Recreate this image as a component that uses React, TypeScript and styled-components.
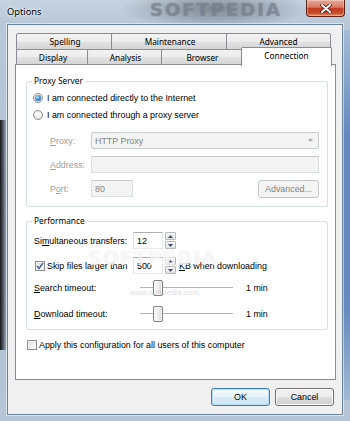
import React from "react";
import styled, { createGlobalStyle } from "styled-components";

const UI = `"Liberation Sans", Arial, sans-serif`;
const SEGOE = `"Noto Sans", "Open Sans", sans-serif`;

const GlobalStyle = createGlobalStyle`
  html, body { margin: 0; padding: 0; }
  body { width: 350px; height: 421px; overflow: hidden; background: #aebfd2; }
  * { box-sizing: border-box; }
`;

const Window = styled.div`
  position: relative;
  width: 350px;
  height: 421px;
  display: flex;
  flex-direction: column;
  overflow: hidden;
  background:
    linear-gradient(to right, rgba(8,8,10,.92) 0, rgba(25,28,34,.65) 3px, rgba(60,80,100,0) 7px) 0 120px / 8px 230px no-repeat,
    linear-gradient(to bottom, rgba(120,160,210,.3) 0, rgba(70,115,180,.75) 30%, rgba(70,115,180,.7) 75%, rgba(120,160,210,.3) 100%) right 0 top 30px / 8px 370px no-repeat,
    radial-gradient(ellipse 95px 20px at 215px 9px, rgba(70,76,86,.55), rgba(70,76,86,0)),
    linear-gradient(to bottom, #c6d3e0 0, #b9c8d8 24px, #aebfd2 60%, #b5c5d6 100%);
`;

const TitleBar = styled.div`
  position: relative;
  height: 24px;
  flex: none;
  display: flex;
  align-items: flex-start;
  justify-content: space-between;
  padding-left: 7px;
`;

const Title = styled.span`
  position: relative;
  z-index: 1;
  font-family: ${SEGOE};
  font-size: 9.3px;
  line-height: 24px;
  color: #000;
  text-shadow: 0 0 5px rgba(255,255,255,.95), 0 0 2px rgba(255,255,255,.9);
`;

const TitleMark = styled.span`
  position: absolute;
  left: 150px;
  top: 0;
  font-family: "DejaVu Sans", sans-serif;
  font-weight: bold;
  font-size: 18px;
  line-height: 20px;
  letter-spacing: 2px;
  color: rgba(150,160,172,.55);
  text-shadow: 0 0 1px rgba(40,45,55,.5);
  pointer-events: none;
`;

const CloseButton = styled.div`
  position: relative;
  width: 39px;
  height: 17px;
  margin-right: 5px;
  border: 1px solid #5b2419;
  border-top: none;
  border-radius: 0 0 4px 4px;
  background: linear-gradient(to bottom, #e9a896 0%, #d97a63 45%, #c23d22 52%, #c5492a 80%, #e0905f 100%);
  box-shadow: inset 0 0 0 1px rgba(255,255,255,.3);
  display: flex;
  align-items: center;
  justify-content: center;
`;

const Client = styled.div`
  flex: 1;
  margin: 0 7px 6px;
  border: 1px solid #6f8499;
  box-shadow: 0 0 0 1px rgba(255,255,255,.5);
  background: #f0f0f0;
  padding: 8px 6px 0 7px;
  display: flex;
  flex-direction: column;
`;

const TabRow = styled.div<{ $front?: boolean }>`
  display: flex;
  align-items: flex-start;
  margin-left: 1px;
  margin-top: ${(p) => (p.$front ? "-1px" : "0")};
`;

const Tab = styled.div<{ $w: number; $h: number; $selected?: boolean }>`
  position: relative;
  flex: none;
  width: ${(p) => (p.$selected ? p.$w + 4 : p.$w)}px;
  height: ${(p) => (p.$selected ? p.$h + 3 : p.$h)}px;
  margin: ${(p) => (p.$selected ? "-2px -2px -1px -3px" : "0")};
  border: 1px solid #898c95;
  border-bottom: ${(p) => (p.$selected ? "none" : "1px solid #898c95")};
  border-radius: 2px 2px 0 0;
  background: ${(p) =>
    p.$selected
      ? "#fff"
      : "linear-gradient(to bottom, #f3f3f3 0%, #ececec 50%, #e1e1e1 52%, #d6d6d6 100%)"};
  z-index: ${(p) => (p.$selected ? 2 : 0)};
  display: flex;
  align-items: ${(p) => (p.$selected ? "flex-start" : "center")};
  padding-top: ${(p) => (p.$selected ? "2px" : "0")};
  justify-content: center;
  font-family: ${SEGOE};
  font-size: 8.3px;
  color: #000;
  & + & { margin-left: ${(p) => (p.$selected ? "-3px" : "-1px")}; }
`;

const Panel = styled.div`
  margin-top: -1px;
  height: 316px;
  flex: none;
  background: #fff;
  border: 1px solid #898c95;
  padding: 0 7px 0 10px;
  display: flex;
  flex-direction: column;
`;

const Group = styled.section<{ $top: number }>`
  margin-top: ${(p) => p.$top}px;
  display: flex;
  flex-direction: column;
`;

const GroupHead = styled.div`
  display: flex;
  height: 12px;
  align-items: stretch;
`;

const HeadLeft = styled.span`
  width: 6px;
  height: 6px;
  align-self: flex-end;
  border-top: 1px solid #d5dfe5;
  border-left: 1px solid #d5dfe5;
  border-top-left-radius: 3px;
`;

const HeadRight = styled.span`
  flex: 1;
  height: 6px;
  align-self: flex-end;
  border-top: 1px solid #d5dfe5;
  border-right: 1px solid #d5dfe5;
  border-top-right-radius: 3px;
`;

const Caption = styled.span`
  padding: 0 2px;
  font-family: ${SEGOE};
  font-size: 8.3px;
  line-height: 12px;
  color: #000;
`;

const GroupBody = styled.div<{ $pt: number; $pb: number; $pl: number }>`
  border: 1px solid #d5dfe5;
  border-top: none;
  border-radius: 0 0 3px 3px;
  padding: ${(p) => `${p.$pt}px 8px ${p.$pb}px ${p.$pl}px`};
  display: flex;
  flex-direction: column;
`;

const Row = styled.div<{ $mt?: number; $h?: number; $pl?: number }>`
  display: flex;
  align-items: center;
  height: ${(p) => p.$h ?? 17}px;
  margin-top: ${(p) => p.$mt ?? 0}px;
  padding-left: ${(p) => p.$pl ?? 0}px;
  font-family: ${UI};
  font-size: 8.9px;
  color: #000;
  white-space: nowrap;
`;

const Radio = styled.span<{ $checked?: boolean }>`
  flex: none;
  width: 10px;
  height: 10px;
  border-radius: 50%;
  border: 1px solid #8e8f8f;
  background: radial-gradient(circle at 50% 40%, #ffffff 0, #ececec 55%, #d2d2d2 100%);
  display: flex;
  align-items: center;
  justify-content: center;
  margin-right: 4px;
  &::after {
    content: "";
    display: ${(p) => (p.$checked ? "block" : "none")};
    width: 6px;
    height: 6px;
    border-radius: 50%;
    background: radial-gradient(circle at 40% 35%, #bfe6fc 0, #3f93d6 45%, #184a83 100%);
  }
`;

const Check = styled.span<{ $ml?: number }>`
  flex: none;
  width: 10px;
  height: 10px;
  margin-left: ${(p) => p.$ml ?? 0}px;
  margin-right: 2px;
  border: 1px solid #8f8f8f;
  background: linear-gradient(135deg, #dcdcdc 0, #f4f4f4 60%, #ffffff 100%);
  box-shadow: inset 0 0 0 1px #f4f4f4;
  display: flex;
  align-items: center;
  justify-content: center;
`;

const Label = styled.span<{ $w?: number; $disabled?: boolean }>`
  flex: none;
  width: ${(p) => (p.$w ? `${p.$w}px` : "auto")};
  color: ${(p) => (p.$disabled ? "#a0a0a0" : "#000")};
`;

const Combo = styled.div`
  flex: 1;
  height: 17px;
  border: 1px solid #c9cbcf;
  border-radius: 2px;
  background: #f4f4f4;
  display: flex;
  align-items: center;
  justify-content: space-between;
  padding: 0 5px 0 3px;
  color: #838383;
`;

const Edit = styled.div<{ $w?: number; $disabled?: boolean }>`
  flex: ${(p) => (p.$w ? "none" : "1")};
  width: ${(p) => (p.$w ? `${p.$w}px` : "auto")};
  height: 17px;
  border: 1px solid ${(p) => (p.$disabled ? "#cfd1d4" : "#abadb3")};
  border-color: ${(p) => (p.$disabled ? "#c6c8cc #dadcdf #dadcdf #dadcdf" : "#abadb3 #e3e9ef #e3e9ef #e2e3ea")};
  background: ${(p) => (p.$disabled ? "#f4f4f4" : "#fff")};
  color: ${(p) => (p.$disabled ? "#838383" : "#000")};
  display: flex;
  align-items: center;
  padding-left: 3px;
`;

const Button = styled.div<{ $w: number; $default?: boolean; $disabled?: boolean }>`
  flex: none;
  width: ${(p) => p.$w}px;
  height: 18px;
  border-radius: 3px;
  border: 1px solid ${(p) => (p.$disabled ? "#c3c6ca" : p.$default ? "#3c7fb1" : "#707070")};
  background: ${(p) =>
    p.$disabled
      ? "#f4f4f4"
      : p.$default
      ? "linear-gradient(to bottom, #f3f9fd 0%, #e6f2fa 50%, #d7ebf8 52%, #cfe6f5 100%)"
      : "linear-gradient(to bottom, #f2f2f2 0%, #ebebeb 50%, #dddddd 52%, #cfcfcf 100%)"};
  box-shadow: inset 0 0 0 1px ${(p) => (p.$disabled ? "#f4f4f4" : p.$default ? "#b8dcf4" : "#fcfcfc")};
  display: flex;
  align-items: center;
  justify-content: center;
  font-family: ${UI};
  font-size: 8.9px;
  color: ${(p) => (p.$disabled ? "#838383" : "#000")};
  margin-left: ${(p) => (p.$disabled ? "auto" : "0")};
`;

const Spin = styled.div`
  flex: none;
  width: 11px;
  height: 17px;
  margin-left: 2px;
  display: flex;
  flex-direction: column;
  gap: 1px;
`;

const SpinHalf = styled.div`
  flex: 1;
  border: 1px solid #b5b8bd;
  border-radius: 1px;
  background: linear-gradient(to bottom, #f6f6f6, #e4e4e4);
  display: flex;
  align-items: center;
  justify-content: center;
`;

const Slider = styled.div`
  position: relative;
  flex: none;
  width: 93px;
  height: 17px;
  &::before {
    content: "";
    position: absolute;
    left: 0;
    right: 0;
    top: 8px;
    height: 1px;
    background: #b5b5b5;
    box-shadow: 0 1px 0 #ffffff;
  }
`;

const Thumb = styled.span`
  position: absolute;
  top: 1px;
  width: 10px;
  height: 16px;
  border: 1px solid #7f7f7f;
  border-radius: 2px;
  background: linear-gradient(to right, #fdfdfd, #ececec 60%, #dadada);
  box-shadow: inset 0 0 0 1px rgba(255,255,255,.7);
`;

const Unit = styled.span<{ $ml: number }>`
  margin-left: ${(p) => p.$ml}px;
`;

const ButtonBar = styled.div`
  display: flex;
  justify-content: flex-end;
  gap: 5px;
  padding: 8px 2px 0 0;
`;

const Watermark = styled.span<{ $x: number; $y: number }>`
  position: absolute;
  left: ${(p) => p.$x}px;
  top: ${(p) => p.$y}px;
  pointer-events: none;
`;

const BigMark = styled(Watermark)`
  font-family: "DejaVu Sans", sans-serif;
  font-weight: bold;
  font-size: 19px;
  letter-spacing: 1px;
  color: rgba(255,255,255,.75);
  text-shadow: 0 0 1px rgba(0,0,0,.12);
`;

const SmallMark = styled(Watermark)`
  font-family: ${UI};
  font-size: 8px;
  color: rgba(170,170,170,.4);
`;

const Arrow = ({ up }: { up?: boolean }) => (
  <svg width="5" height="3" viewBox="0 0 5 3">
    <path d={up ? "M0 3 L2.5 0 L5 3 Z" : "M0 0 L5 0 L2.5 3 Z"} fill="#3d4e70" />
  </svg>
);

const Spinner = () => (
  <Spin>
    <SpinHalf>
      <Arrow up />
    </SpinHalf>
    <SpinHalf>
      <Arrow />
    </SpinHalf>
  </Spin>
);

const TrackBar = ({ value }: { value: number }) => (
  <Slider>
    <Thumb style={{ left: `${value}px` }} />
  </Slider>
);

const row1 = [
  { label: "Spelling", w: 98 },
  { label: "Maintenance", w: 118 },
  { label: "Advanced", w: 105 },
];
const row2 = [
  { label: "Display", w: 74 },
  { label: "Analysis", w: 77 },
  { label: "Browser", w: 83 },
  { label: "Connection", w: 87, selected: true },
];

export default function App() {
  return (
    <>
      <GlobalStyle />
      <Window>
        <TitleBar>
          <Title>Options</Title>
          <TitleMark>SOFTPEDIA</TitleMark>
          <CloseButton>
            <svg width="12" height="9" viewBox="0 0 12 9">
              <path d="M2 1 L10 8 M10 1 L2 8" stroke="#4a1a10" strokeWidth="3.6" strokeLinecap="round" />
              <path d="M2 1 L10 8 M10 1 L2 8" stroke="#ffffff" strokeWidth="2" strokeLinecap="round" />
            </svg>
          </CloseButton>
        </TitleBar>
        <Client>
          <TabRow>
            {row1.map((t) => (
              <Tab key={t.label} $w={t.w} $h={17}>
                {t.label}
              </Tab>
            ))}
          </TabRow>
          <TabRow $front>
            {row2.map((t) => (
              <Tab key={t.label} $w={t.w} $h={16} $selected={t.selected}>
                {t.label}
              </Tab>
            ))}
          </TabRow>
          <Panel>
            <Group $top={10}>
              <GroupHead>
                <HeadLeft />
                <Caption>Proxy Server</Caption>
                <HeadRight />
              </GroupHead>
              <GroupBody $pt={4} $pb={9} $pl={6}>
                <Row $h={14}>
                  <Radio $checked />
                  I am connected directly to the Internet
                </Row>
                <Row $h={14} $mt={3}>
                  <Radio />
                  I am connected through a proxy server
                </Row>
                <Row $mt={10} $pl={17}>
                  <Label $w={41} $disabled>
                    <u>P</u>roxy:
                  </Label>
                  <Combo>
                    HTTP Proxy
                    <svg width="5" height="3" viewBox="0 0 5 3">
                      <path d="M0 0 L5 0 L2.5 3 Z" fill="#a8a8a8" />
                    </svg>
                  </Combo>
                </Row>
                <Row $mt={7} $pl={17}>
                  <Label $w={41} $disabled>
                    <u>A</u>ddress:
                  </Label>
                  <Edit $disabled />
                </Row>
                <Row $mt={7} $pl={17}>
                  <Label $w={41} $disabled>
                    P<u>o</u>rt:
                  </Label>
                  <Edit $w={42} $disabled>
                    80
                  </Edit>
                  <Button $w={61} $disabled>
                    Advanced...
                  </Button>
                </Row>
              </GroupBody>
            </Group>
            <Group $top={8}>
              <GroupHead>
                <HeadLeft />
                <Caption>Performance</Caption>
                <HeadRight />
              </GroupHead>
              <GroupBody $pt={5} $pb={7} $pl={7}>
                <Row>
                  <Label $w={99}>
                    Si<u>m</u>ultaneous transfers:
                  </Label>
                  <Edit $w={30}>12</Edit>
                  <Spinner />
                </Row>
                <Row $mt={8}>
                  <Check $ml={1}>
                    <svg width="8" height="8" viewBox="0 0 8 8">
                      <path d="M1 4 L3 6.5 L7 1" fill="none" stroke="#4a5f97" strokeWidth="1.5" />
                    </svg>
                  </Check>
                  <Label $w={86}>Skip files larger than</Label>
                  <Edit $w={30}>500</Edit>
                  <Spinner />
                  <Unit $ml={3}>
                    <u>K</u>B when downloading
                  </Unit>
                </Row>
                <Row $mt={5}>
                  <Label $w={106}>
                    <u>S</u>earch timeout:
                  </Label>
                  <TrackBar value={13} />
                  <Unit $ml={13}>1 min</Unit>
                </Row>
                <Row $mt={9}>
                  <Label $w={106}>
                    <u>D</u>ownload timeout:
                  </Label>
                  <TrackBar value={13} />
                  <Unit $ml={13}>1 min</Unit>
                </Row>
              </GroupBody>
            </Group>
            <Row $h={14} $mt={8} $pl={1}>
              <Check />
              Apply this configuration for all users of this computer
            </Row>
          </Panel>
          <ButtonBar>
            <Button $w={59} $default>
              OK
            </Button>
            <Button $w={59}>Cancel</Button>
          </ButtonBar>
        </Client>
        <BigMark $x={88} $y={247}>SOFTPEDIA</BigMark>
        <SmallMark $x={130} $y={288}>www.softpedia.com</SmallMark>
      </Window>
    </>
  );
}
